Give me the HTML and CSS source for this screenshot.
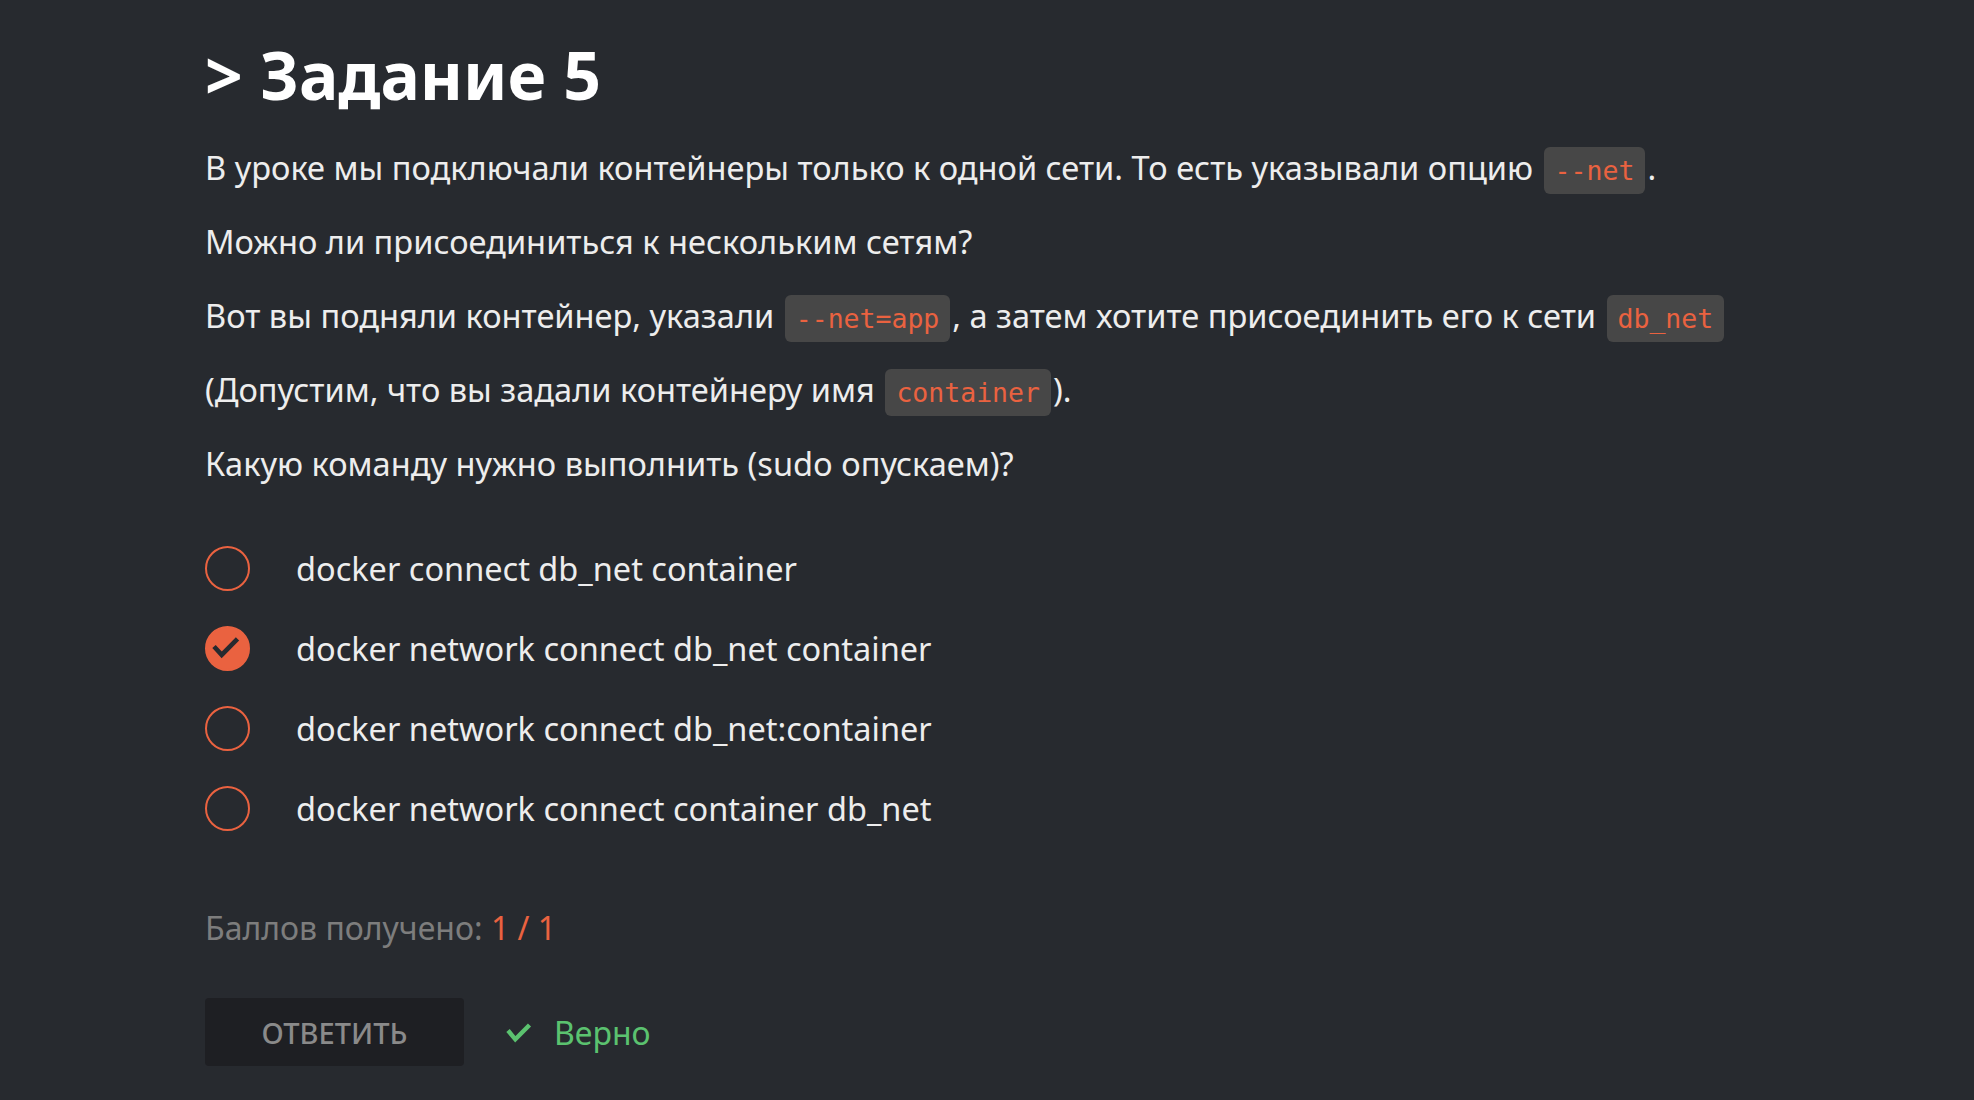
FILE: index.html
```html
<!DOCTYPE html>
<html lang="ru">
<head>
<meta charset="utf-8">
<link rel="stylesheet" href="styles.css">
</head>
<body>
<main class="task">
  <h1 class="title">&gt; Задание 5</h1>
  <div class="question">
    <p>В уроке мы подключали контейнеры только к одной сети. То есть указывали опцию <code>--net</code>.</p>
    <p>Можно ли присоединиться к нескольким сетям?</p>
    <p>Вот вы подняли контейнер, указали <code>--net=app</code>, а затем хотите присоединить его к сети <code>db_net</code></p>
    <p>(Допустим, что вы задали контейнеру имя <code>container</code>).</p>
    <p>Какую команду нужно выполнить (sudo опускаем)?</p>
  </div>
  <ul class="options">
    <li class="option"><span class="radio"></span><span class="label">docker connect db_net container</span></li>
    <li class="option"><span class="radio checked"><svg viewBox="0 0 41 41" width="41" height="41"><path d="M7 18.5l7.7 8.4L30.5 10.8" fill="none" stroke="#272a2f" stroke-width="4.6" stroke-linejoin="miter"/></svg></span><span class="label">docker network connect db_net container</span></li>
    <li class="option"><span class="radio"></span><span class="label">docker network connect db_net:container</span></li>
    <li class="option"><span class="radio"></span><span class="label">docker network connect container db_net</span></li>
  </ul>
  <div class="score">Баллов получено: <span class="accent">1 / 1</span></div>
  <div class="actions">
    <button class="answer">ОТВЕТИТЬ</button>
    <span class="result"><svg class="ok" viewBox="0 0 26 20" width="26" height="20"><path d="M2 7.5l7.3 8.8L23.5 2" fill="none" stroke="#5bc26f" stroke-width="4.4"/></svg>Верно</span>
  </div>
</main>
</body>
</html>
```
FILE: styles.css
```css
html, body {
  margin: 0;
  padding: 0;
  background: #272a2f;
}
body {
  font-family: "Noto Sans", "Liberation Sans", sans-serif;
  color: #ededed;
  width: 1974px;
  height: 1100px;
  overflow: hidden;
}
.task {
  padding: 34px 0 0 205px;
}
.title {
  margin: 0;
  font-size: 66px;
  font-weight: 700;
  line-height: 80px;
  color: #ffffff;
}
.question {
  margin-top: 31px;
}
.question p {
  margin: 0 0 28px 0;
  font-size: 32.6px;
  line-height: 46px;
}
code {
  font-family: "DejaVu Sans Mono", "Liberation Mono", monospace;
  font-size: 26.5px;
  line-height: 1;
  color: #ea6240;
  background: #474747;
  border-radius: 6px;
  padding: 8px 11px;
  margin: 0 2px;
}
.options {
  list-style: none;
  margin: 59px 0 0 0;
  padding: 0;
  display: flex;
  flex-direction: column;
  gap: 36px;
}
.option {
  display: flex;
  align-items: center;
  gap: 46px;
  height: 44px;
}
.radio {
  width: 41px;
  height: 41px;
  border: 2px solid #ea6240;
  border-radius: 50%;
  box-sizing: content-box;
  flex: none;
  display: flex;
  align-items: center;
  justify-content: center;
}
.radio.checked {
  background: #ea6240;
}
.label {
  font-size: 32.5px;
  color: #ededed;
}
.score {
  margin-top: 76px;
  font-size: 32px;
  color: #7d7d7d;
}
.accent {
  color: #ea6240;
}
.actions {
  margin-top: 49px;
  display: flex;
  align-items: center;
  gap: 42px;
}
.answer {
  width: 259px;
  height: 68px;
  border: 0;
  border-radius: 4px;
  background: #1e1f23;
  color: #8a8a8a;
  font-family: "Noto Sans", "Liberation Sans", sans-serif;
  font-size: 29px;
  font-weight: 500;
}
.result {
  display: flex;
  align-items: center;
  gap: 22px;
  font-size: 32px;
  color: #5bc26f;
}
.ok {
  margin-top: 2px;
}
```
